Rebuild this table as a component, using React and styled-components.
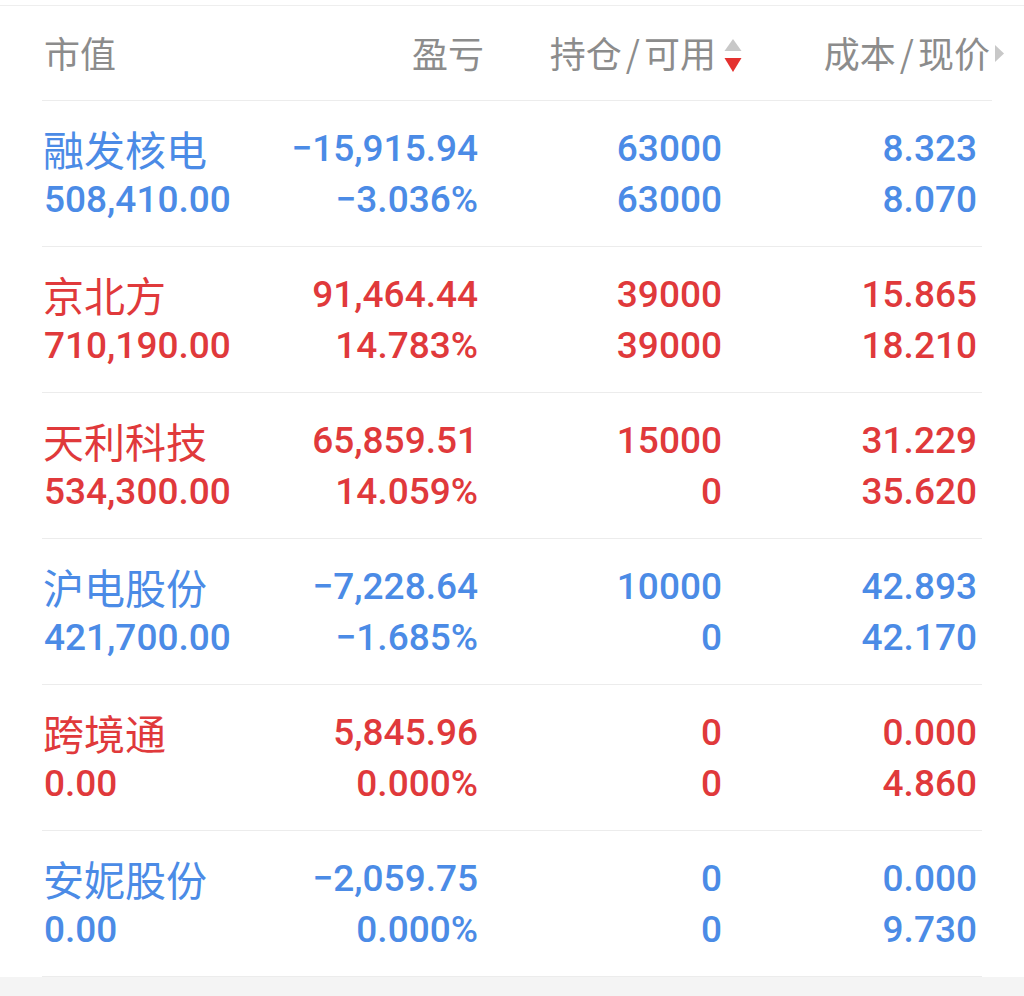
import styled, { createGlobalStyle } from "styled-components";

const Global = createGlobalStyle`
    html, body {
        margin: 0;
        padding: 0;
        background: #f4f4f4;
    }
    body {
        width: 1024px;
        min-height: 996px;
    }
`;

const BLUE = "#4b8be6";
const RED = "#e0393b";

const Page = styled.div`
    background: #fff;
    padding-top: 5px;
`;

const Panel = styled.div`
    border-top: 1px solid #eeeeee;
`;

const Header = styled.div`
    display: grid;
    grid-template-columns: 240px 202px 258px 262px;
    height: 94px;
    align-items: center;
    padding-left: 42px;
    font-family: "Noto Sans CJK SC", sans-serif;
    font-size: 36px;
    color: #8c8c8c;
`;

const HeadCell = styled.div`
    display: flex;
    align-items: center;
    justify-content: ${(p) => (p.$left ? "flex-start" : "flex-end")};
    padding-left: 2px;
    margin-top: -2px;
`;

const Slash = styled.span`
    margin: 0 4px;
`;

const SortIcon = styled.svg`
    width: 18px;
    height: 34px;
    margin-left: 8px;
    margin-top: 8px;
`;

const MoreIcon = styled.svg`
    width: 9px;
    height: 17px;
    margin-left: 5px;
    margin-top: 2px;
`;

const Divider = styled.div`
    height: 1px;
    background: #ececec;
    margin-left: 42px;
    margin-right: ${(p) => p.$right}px;
`;

const Row = styled.div`
    display: grid;
    grid-template-columns: 240px 196px 244px 255px;
    padding: 22px 0 21px 42px;
    color: ${(p) => (p.$up ? RED : BLUE)};
`;

const Cell = styled.div`
    display: flex;
    flex-direction: column;
    align-items: ${(p) => (p.$left ? "flex-start" : "flex-end")};
`;

const Name = styled.div`
    font-family: "Noto Sans CJK SC", sans-serif;
    font-size: 41px;
    line-height: 51px;
    height: 51px;
    padding-left: 1px;
`;

const Num = styled.div`
    font-family: Roboto, "Liberation Sans", sans-serif;
    font-size: 37px;
    font-weight: 500;
    line-height: 51px;
    height: 51px;
    white-space: nowrap;
    padding-left: ${(p) => (p.$left ? "2px" : "0")};
`;

const stocks = [
    { name: "融发核电", value: "508,410.00", pl: "−15,915.94", pct: "−3.036%", hold: "63000", avail: "63000", cost: "8.323", price: "8.070", up: false },
    { name: "京北方", value: "710,190.00", pl: "91,464.44", pct: "14.783%", hold: "39000", avail: "39000", cost: "15.865", price: "18.210", up: true },
    { name: "天利科技", value: "534,300.00", pl: "65,859.51", pct: "14.059%", hold: "15000", avail: "0", cost: "31.229", price: "35.620", up: true },
    { name: "沪电股份", value: "421,700.00", pl: "−7,228.64", pct: "−1.685%", hold: "10000", avail: "0", cost: "42.893", price: "42.170", up: false },
    { name: "跨境通", value: "0.00", pl: "5,845.96", pct: "0.000%", hold: "0", avail: "0", cost: "0.000", price: "4.860", up: true },
    { name: "安妮股份", value: "0.00", pl: "−2,059.75", pct: "0.000%", hold: "0", avail: "0", cost: "0.000", price: "9.730", up: false },
];

export default function App() {
    return (
        <Page>
            <Global />
            <Panel>
                <Header>
                    <HeadCell $left>市值</HeadCell>
                    <HeadCell>盈亏</HeadCell>
                    <HeadCell>
                        持仓<Slash>/</Slash>可用
                        <SortIcon viewBox="0 0 18 34">
                            <path d="M9 0 L17.5 12 L0.5 12 Z" fill="#c8c8c8" />
                            <path d="M0.5 19 L17.5 19 L9 33 Z" fill="#e4312f" />
                        </SortIcon>
                    </HeadCell>
                    <HeadCell>
                        成本<Slash>/</Slash>现价
                        <MoreIcon viewBox="0 0 9 17">
                            <path d="M0 0 L9 8.5 L0 17 Z" fill="#c8c8c8" />
                        </MoreIcon>
                    </HeadCell>
                </Header>
                <Divider $right={32} />
                {stocks.map((s) => (
                    <div key={s.name}>
                        <Row $up={s.up}>
                            <Cell $left>
                                <Name>{s.name}</Name>
                                <Num $left>{s.value}</Num>
                            </Cell>
                            <Cell>
                                <Num>{s.pl}</Num>
                                <Num>{s.pct}</Num>
                            </Cell>
                            <Cell>
                                <Num>{s.hold}</Num>
                                <Num>{s.avail}</Num>
                            </Cell>
                            <Cell>
                                <Num>{s.cost}</Num>
                                <Num>{s.price}</Num>
                            </Cell>
                        </Row>
                        <Divider $right={42} />
                    </div>
                ))}
            </Panel>
        </Page>
    );
}
